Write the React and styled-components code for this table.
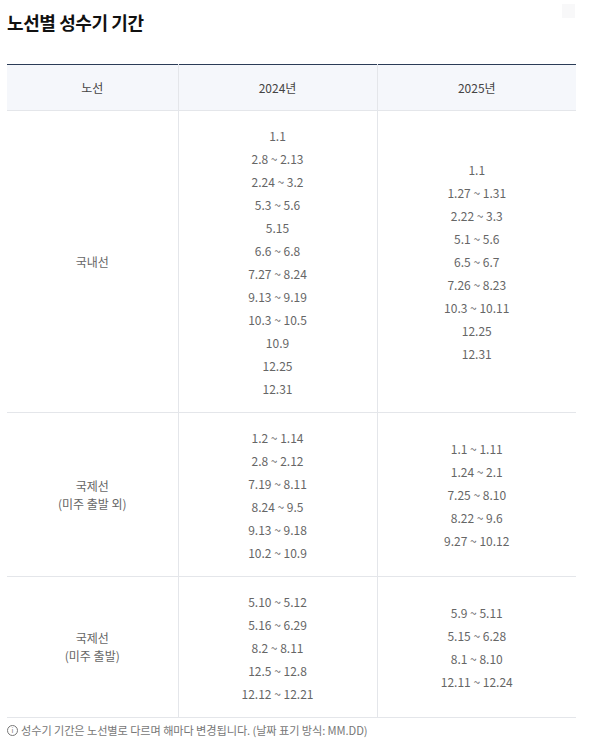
import React from "react";
import styled, { createGlobalStyle } from "styled-components";

const Global = createGlobalStyle`
  html, body { margin: 0; padding: 0; background: #fff; }
  body { font-family: "Noto Sans CJK KR", "Noto Sans", sans-serif; color: #333; }
`;

const Page = styled.div`
  position: relative;
  padding: 10px 0 0 7px;
  width: 569px;
`;

const Title = styled.h2`
  margin: 0;
  font-size: 18px;
  font-weight: 700;
  letter-spacing: -0.4px;
  line-height: 24px;
  color: #111;
`;

const Ghost = styled.div`
  position: absolute;
  top: 4px;
  left: 562px;
  width: 13px;
  height: 14px;
  background: #f8f8f9;
`;

const Table = styled.table`
  margin-top: 30px;
  width: 569px;
  border-collapse: collapse;
  table-layout: fixed;
  border-top: 1.5px solid #2b3c57;
  font-size: 12px;
`;

const Th = styled.th`
  height: 45px;
  background: #f5f7fb;
  font-weight: 400;
  color: #444;
  font-size: 12px;
  border-bottom: 1px solid #e4e6ea;
  border-left: ${p => (p.$first ? "none" : "1px solid #e4e6ea")};
  padding: 0;
`;

const Td = styled.td`
  text-align: center;
  vertical-align: middle;
  color: #666;
  padding: 12.5px 0;
  border-bottom: 1px solid #e4e6ea;
  border-left: ${p => (p.$first ? "none" : "1px solid #e4e6ea")};
  line-height: 18px;
`;

const List = styled.ul`
  margin: 0;
  padding: 0;
  list-style: none;
`;

const Item = styled.li`
  line-height: 23px;
  color: #666;
`;

const Note = styled.p`
  margin: 4px 0 0;
  font-size: 11.2px;
  color: #777;
  display: flex;
  align-items: center;
  gap: 3px;
  letter-spacing: -0.1px;
`;

const Info = styled.span`
  width: 9px;
  height: 9px;
  border: 1px solid #777;
  border-radius: 50%;
  font-size: 7px;
  line-height: 9px;
  text-align: center;
  display: inline-block;
`;

const rows = [
  {
    label: ["국내선"],
    a: ["1.1", "2.8 ~ 2.13", "2.24 ~ 3.2", "5.3 ~ 5.6", "5.15", "6.6 ~ 6.8", "7.27 ~ 8.24", "9.13 ~ 9.19", "10.3 ~ 10.5", "10.9", "12.25", "12.31"],
    b: ["1.1", "1.27 ~ 1.31", "2.22 ~ 3.3", "5.1 ~ 5.6", "6.5 ~ 6.7", "7.26 ~ 8.23", "10.3 ~ 10.11", "12.25", "12.31"],
  },
  {
    label: ["국제선", "(미주 출발 외)"],
    a: ["1.2 ~ 1.14", "2.8 ~ 2.12", "7.19 ~ 8.11", "8.24 ~ 9.5", "9.13 ~ 9.18", "10.2 ~ 10.9"],
    b: ["1.1 ~ 1.11", "1.24 ~ 2.1", "7.25 ~ 8.10", "8.22 ~ 9.6", "9.27 ~ 10.12"],
  },
  {
    label: ["국제선", "(미주 출발)"],
    a: ["5.10 ~ 5.12", "5.16 ~ 6.29", "8.2 ~ 8.11", "12.5 ~ 12.8", "12.12 ~ 12.21"],
    b: ["5.9 ~ 5.11", "5.15 ~ 6.28", "8.1 ~ 8.10", "12.11 ~ 12.24"],
  },
];

export default function App() {
  return (
    <>
      <Global />
      <Page>
        <Ghost />
        <Title>노선별 성수기 기간</Title>
        <Table>
          <colgroup>
            <col style={{ width: 171 }} />
            <col style={{ width: 199 }} />
            <col style={{ width: 199 }} />
          </colgroup>
          <thead>
            <tr>
              <Th $first>노선</Th>
              <Th>2024년</Th>
              <Th>2025년</Th>
            </tr>
          </thead>
          <tbody>
            {rows.map((r, i) => (
              <tr key={i}>
                <Td $first>
                  {r.label.map((l, j) => (
                    <div key={j}>{l}</div>
                  ))}
                </Td>
                <Td>
                  <List>
                    {r.a.map((d, j) => (
                      <Item key={j}>{d}</Item>
                    ))}
                  </List>
                </Td>
                <Td>
                  <List>
                    {r.b.map((d, j) => (
                      <Item key={j}>{d}</Item>
                    ))}
                  </List>
                </Td>
              </tr>
            ))}
          </tbody>
        </Table>
        <Note>
          <Info>i</Info>
          성수기 기간은 노선별로 다르며 해마다 변경됩니다. (날짜 표기 방식: MM.DD)
        </Note>
      </Page>
    </>
  );
}
